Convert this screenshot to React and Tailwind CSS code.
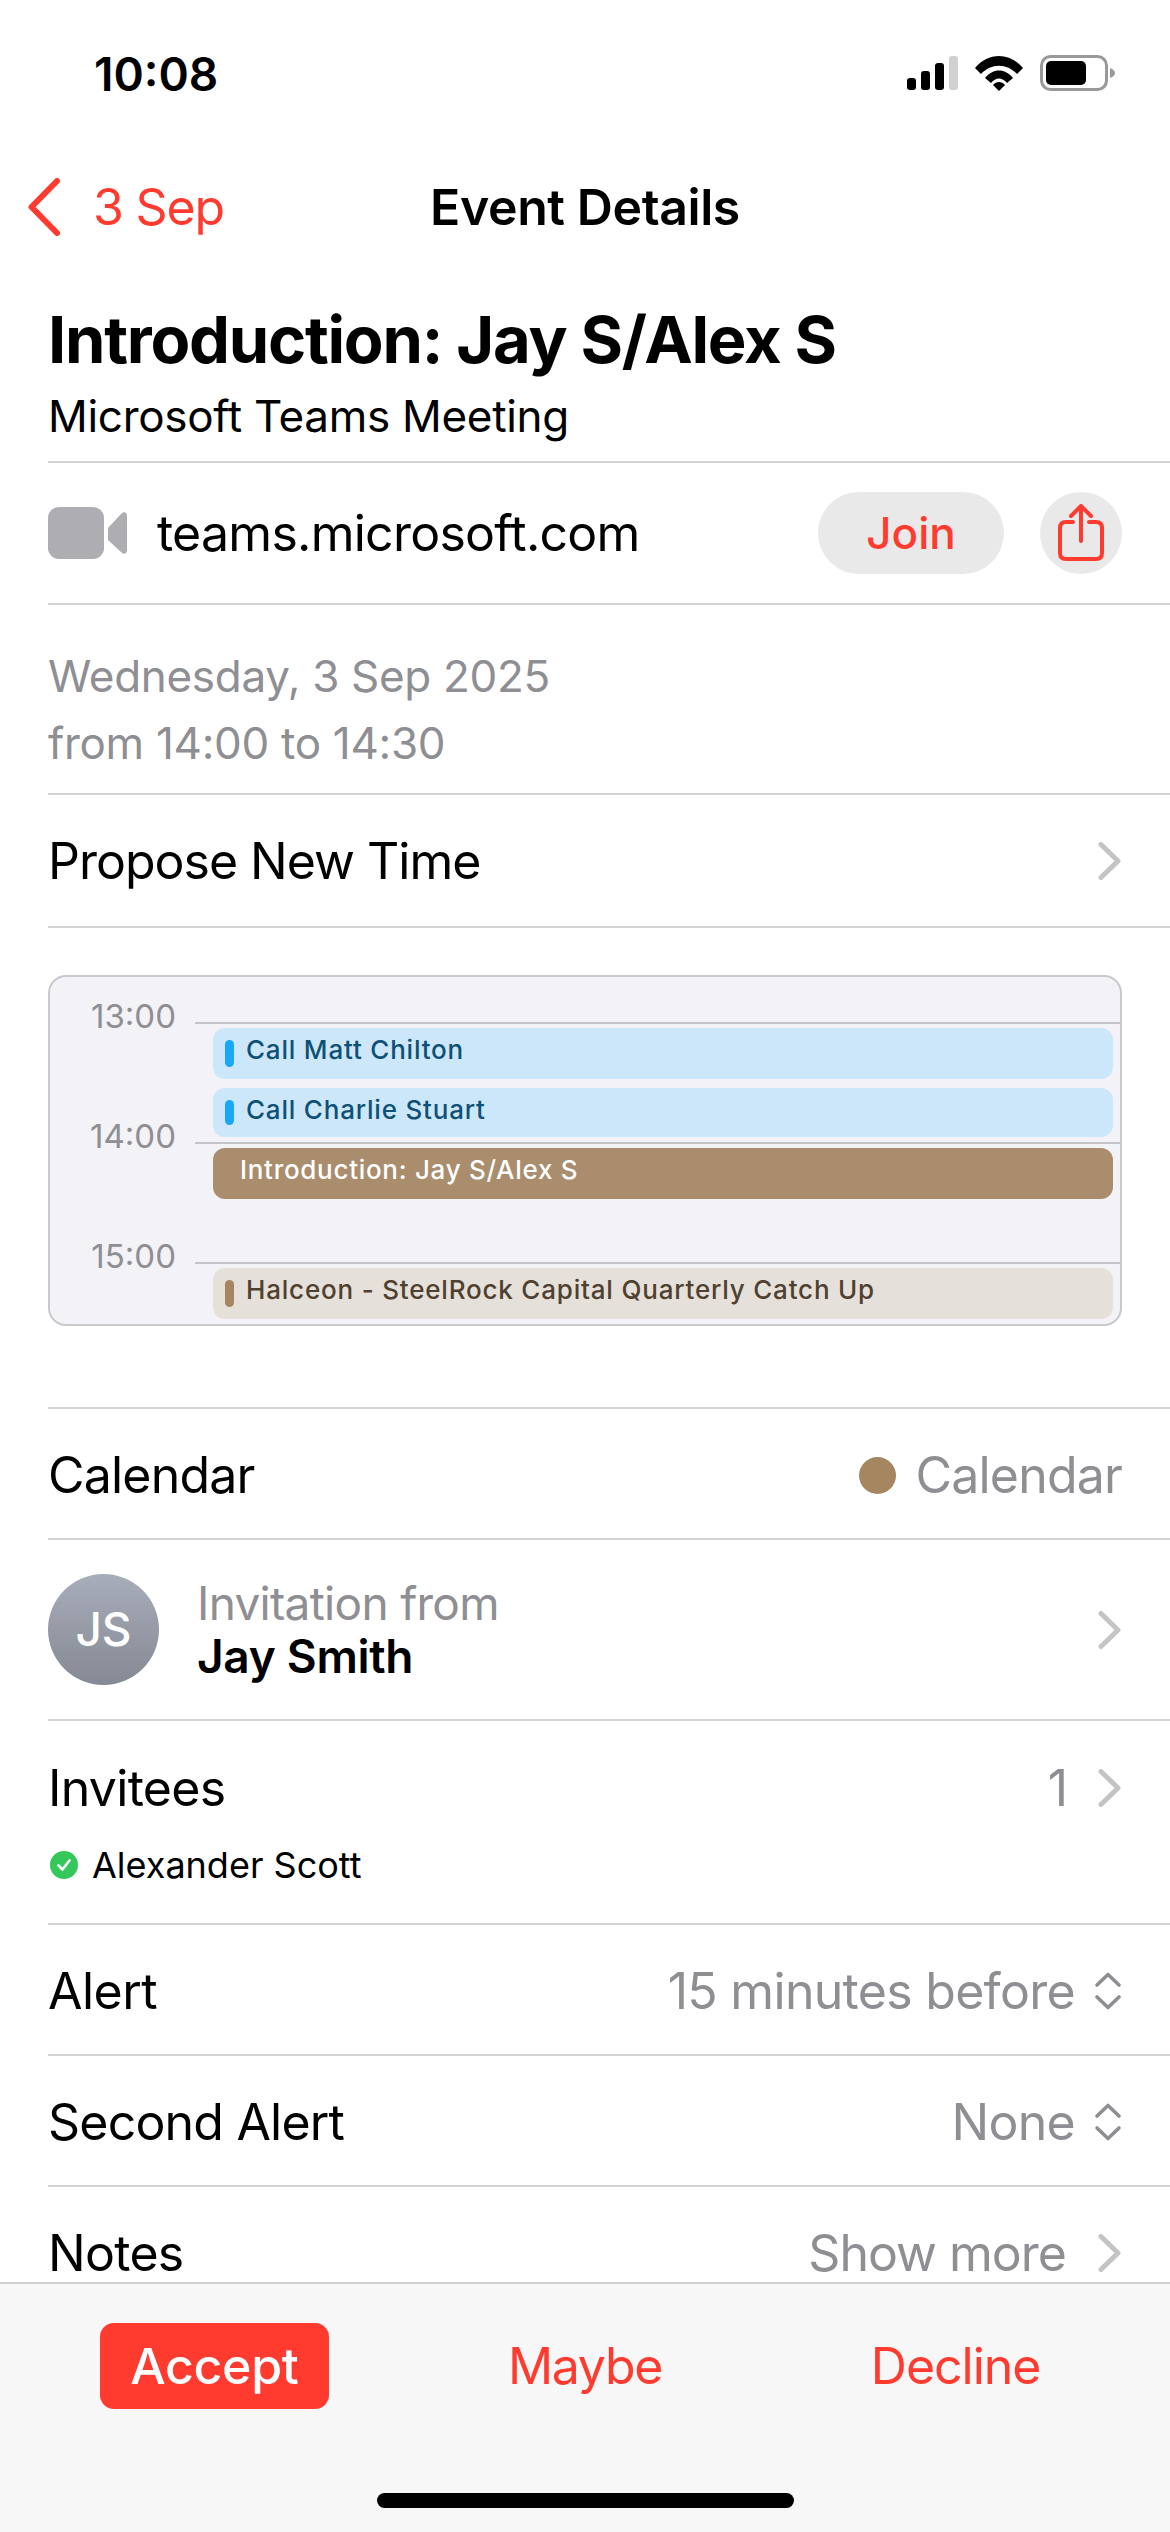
import React from 'react';

const hours = [
  { id: 'h0', rowClass: 'h-[47px]', label: '13:00' },
  { id: 'h1', rowClass: 'h-[120px]', label: '14:00' },
  { id: 'h2', rowClass: 'h-[120px]', label: '15:00' },
];

const events = [
  { id: 'e1', title: 'Call Matt Chilton', box: 'top-[51px] h-[51px] bg-[#cbe7f9] text-[#0f5076]', bar: 'bg-[#1aa7f5]', barPos: 'top-[12px] h-[27px]' },
  { id: 'e2', title: 'Call Charlie Stuart', box: 'top-[111px] h-[49px] bg-[#cbe7f9] text-[#0f5076]', bar: 'bg-[#1aa7f5]', barPos: 'top-[12px] h-[25px]' },
  { id: 'e4', title: 'Halceon - SteelRock Capital Quarterly Catch Up', box: 'top-[291px] h-[51px] bg-[#e5e0da] text-[#4f4030]', bar: 'bg-[#a58660]', barPos: 'top-[12px] h-[27px]' },
];

const Chevron = () => (
  <svg className="w-[24px] h-[38px]" viewBox="0 0 24 38" fill="none">
    <path d="M3 2.5 L20 19 L3 35.5" stroke="#c4c4c7" strokeWidth="5" strokeLinecap="round" strokeLinejoin="round" />
  </svg>
);

const UpDown = () => (
  <svg className="w-[28px] h-[38px]" viewBox="0 0 28 38" fill="none">
    <path d="M3 13 L14 2.5 L25 13 M3 25 L14 35.5 L25 25" stroke="#8e8e93" strokeWidth="3.6" strokeLinecap="round" strokeLinejoin="round" />
  </svg>
);

const Row = ({ className, children }) => (
  <div className={`ml-[48px] pr-[48px] flex items-center border-b-2 border-[#d4d4d6] ${className}`}>
    {children}
  </div>
);

const App = () => {
  return (
    <div className="w-[1170px] h-[2532px] flex flex-col overflow-hidden bg-white text-black font-[Inter,sans-serif]">
      {/* Status bar */}
      <div className="h-[150px] shrink-0 pl-[94px] pr-[55px] pt-[50px] flex items-start justify-between">
        <span className="text-[46px] leading-[48px] font-semibold">10:08</span>
        <div className="flex items-start gap-[17px] pt-[5px]">
          <svg className="w-[51px] h-[36px]" viewBox="0 0 51 36">
            <rect x="0" y="23" width="9" height="12" rx="3" fill="#000" />
            <rect x="14" y="16" width="9" height="19" rx="3" fill="#000" />
            <rect x="28" y="8" width="9" height="27" rx="3" fill="#000" />
            <rect x="42" y="1" width="9" height="34" rx="3" fill="#d0d0d0" />
          </svg>
          <svg className="w-[48px] h-[36px]" viewBox="0 0 48 36">
            <path d="M0 13 C13 -3 35 -3 48 13 L42 19 C32 8 16 8 6 19 Z" fill="#000" />
            <path d="M10 23 C18 13 30 13 38 23 L32 28 C27 22 21 22 16 28 Z" fill="#000" />
            <path d="M18 30 C21 26 27 26 30 30 L24 36 Z" fill="#000" />
          </svg>
          <svg className="w-[75px] h-[36px]" viewBox="0 0 75 36">
            <rect x="1.5" y="1.5" width="65" height="33" rx="9" fill="none" stroke="#999" strokeWidth="3" />
            <rect x="6" y="6" width="40" height="24" rx="5" fill="#000" />
            <path d="M70 13 C73 14 75 16 75 18 C75 20 73 22 70 23 Z" fill="#999" />
          </svg>
        </div>
      </div>

      {/* Nav bar */}
      <div className="h-[114px] shrink-0 relative flex items-center pl-[28px]">
        <svg className="w-[32px] h-[58px]" viewBox="0 0 32 58" fill="none">
          <path d="M29 3 L3.500 29 L29 55" stroke="#ff3b30" strokeWidth="6" strokeLinecap="round" strokeLinejoin="round" />
        </svg>
        <span className="ml-[33px] text-[50px] leading-[60px] tracking-[-1.2px] text-[#ff3b30]">3 Sep</span>
        <span className="absolute left-0 right-0 text-center text-[50px] leading-[60px] font-semibold tracking-[-0.4px]">Event Details</span>
      </div>

      <div className="flex-1 min-h-0 overflow-hidden">
        {/* Title */}
        <div className="ml-[48px] h-[199px] border-b-2 border-[#d4d4d6] pt-[36px]">
          <h1 className="text-[65px] leading-[80px] font-bold tracking-[-1.25px]">Introduction: Jay S/Alex S</h1>
          <p className="text-[44px] leading-[54px] tracking-[-0.3px] mt-[9px]">Microsoft Teams Meeting</p>
        </div>

        {/* Join row */}
        <Row className="h-[142px]">
          <svg className="w-[79px] h-[52px] shrink-0" viewBox="0 0 79 52">
            <rect x="0" y="0" width="56" height="52" rx="11" fill="#aeaeb2" />
            <path d="M60 21 L73 7 C76 4 79 5 79 9 L79 43 C79 47 76 48 73 45 L60 33 Z" fill="#aeaeb2" />
          </svg>
          <span className="ml-[30px] text-[50px] leading-[60px] tracking-[-0.75px]">teams.microsoft.com</span>
          <button className="ml-auto w-[186px] h-[82px] rounded-full bg-[#e9e9ea] text-[#ff3b30] text-[44px] font-medium">Join</button>
          <div className="ml-[36px] w-[82px] h-[82px] rounded-full bg-[#e9e9ea] flex items-center justify-center">
            <svg className="w-[46px] h-[58px]" viewBox="0 0 46 58" fill="none">
              <path d="M15 18 H8 C4 18 2 20 2 24 V49 C2 53 4 55 8 55 H38 C42 55 44 53 44 49 V24 C44 20 42 18 38 18 H31" stroke="#ff3b30" strokeWidth="4" strokeLinecap="round" />
              <path d="M23 37 V3 M13 12 L23 2 L33 12" stroke="#ff3b30" strokeWidth="4" strokeLinecap="round" strokeLinejoin="round" />
            </svg>
          </div>
        </Row>

        {/* Date */}
        <div className="ml-[48px] h-[190px] border-b-2 border-[#d4d4d6] pt-[38px] text-[44px] leading-[67px] tracking-[-0.3px] text-[#8e8e93]">
          <div>Wednesday, 3 Sep 2025</div>
          <div>from 14:00 to 14:30</div>
        </div>

        <Row className="h-[133px] justify-between">
          <span className="text-[50px] leading-[60px] tracking-[-1px]">Propose New Time</span>
          <Chevron />
        </Row>

        {/* Day preview */}
        <div className="ml-[48px] pr-[48px] h-[481px] pt-[47px] border-b-2 border-[#d4d4d6]">
          <div className="relative h-[351px] rounded-[18px] border-2 border-[#c9c9cd] bg-[#f2f2f7] overflow-hidden">
            {hours.map((h) => (
              <div key={h.id} className={`flex items-end ${h.rowClass}`}>
                <span className="w-[145px] pr-[19px] text-right text-[33px] leading-[14px] text-[#8e8e93] relative bottom-[1px]">{h.label}</span>
                <div className="flex-1 h-[2px] bg-[#c4c4c8]" />
              </div>
            ))}
            {events.map((e) => (
              <div key={e.id} className={`absolute left-[163px] right-[7px] rounded-[12px] pl-[33px] text-[26px] leading-[44px] font-medium tracking-[0.8px] ${e.box}`}>
                <div className={`absolute left-[12px] w-[9px] rounded-full ${e.bar} ${e.barPos}`} />
                {e.title}
              </div>
            ))}
            <div className="absolute left-[163px] right-[7px] top-[171px] h-[51px] rounded-[12px] bg-[#a98d6d] pl-[27px] text-[26px] leading-[44px] font-medium tracking-[0.7px] text-white">
              Introduction: Jay S/Alex S
            </div>
          </div>
        </div>

        <Row className="h-[131px] pt-[3px] justify-between">
          <span className="text-[50px] leading-[60px] tracking-[-0.8px]">Calendar</span>
          <div className="flex items-center gap-[19px]">
            <span className="w-[37px] h-[37px] rounded-full bg-[#a58660]" />
            <span className="text-[50px] leading-[60px] tracking-[-0.8px] text-[#8e8e93]">Calendar</span>
          </div>
        </Row>

        <Row className="h-[181px]">
          <div className="w-[111px] h-[111px] rounded-full bg-linear-to-b from-[#a8adba] to-[#858993] flex items-center justify-center text-white text-[46px] font-medium">JS</div>
          <div className="ml-[38px] flex flex-col">
            <span className="text-[46px] leading-[53px] tracking-[-0.7px] text-[#8e8e93]">Invitation from</span>
            <span className="text-[46px] leading-[53px] tracking-[-0.3px] font-semibold">Jay Smith</span>
          </div>
          <div className="ml-auto flex"><Chevron /></div>
        </Row>

        <div className="ml-[48px] pr-[48px] h-[204px] border-b-2 border-[#d4d4d6] pt-[37px]">
          <div className="flex items-center justify-between">
            <span className="text-[50px] leading-[60px] tracking-[-0.7px]">Invitees</span>
            <div className="flex items-center gap-[30px]">
              <span className="text-[50px] leading-[60px] text-[#8e8e93]">1</span>
              <Chevron />
            </div>
          </div>
          <div className="flex items-center gap-[14px] mt-[25px] pl-[2px]">
            <svg className="w-[28px] h-[28px]" viewBox="0 0 28 28">
              <circle cx="14" cy="14" r="14" fill="#34c759" />
              <path d="M8.500 14.500 L12.500 18.500 L19.500 9.500" fill="none" stroke="#fff" strokeWidth="2.600" strokeLinecap="round" strokeLinejoin="round" />
            </svg>
            <span className="text-[36px] leading-[44px]">Alexander Scott</span>
          </div>
        </div>

        <Row className="h-[131px] pt-[3px] justify-between">
          <span className="text-[50px] leading-[60px] tracking-[-0.5px]">Alert</span>
          <div className="flex items-center gap-[19px]">
            <span className="text-[50px] leading-[60px] tracking-[-0.7px] text-[#8e8e93]">15 minutes before</span>
            <UpDown />
          </div>
        </Row>

        <Row className="h-[131px] pt-[3px] justify-between">
          <span className="text-[50px] leading-[60px] tracking-[-0.8px]">Second Alert</span>
          <div className="flex items-center gap-[19px]">
            <span className="text-[50px] leading-[60px] tracking-[-0.7px] text-[#8e8e93]">None</span>
            <UpDown />
          </div>
        </Row>

        <div className="ml-[48px] pr-[48px] h-[131px] flex items-center justify-between">
          <span className="text-[50px] leading-[60px] tracking-[-0.7px]">Notes</span>
          <div className="flex items-center gap-[32px]">
            <span className="text-[50px] leading-[60px] tracking-[-1px] text-[#8e8e93]">Show more</span>
            <Chevron />
          </div>
        </div>
      </div>

      {/* Response bar */}
      <div className="h-[250px] shrink-0 bg-[#f7f7f7] border-t-2 border-[#d0d0d2] pt-[39px] flex flex-col items-center">
        <div className="w-full px-[29px] grid grid-cols-3 justify-items-center items-center text-[50px] leading-[60px] text-[#ff3b30]">
          <button className="w-[229px] h-[86px] rounded-[14px] bg-[#ff3b30] text-white font-medium tracking-[-0.3px]">Accept</button>
          <button className="tracking-[-1.3px]">Maybe</button>
          <button className="tracking-[-1px]">Decline</button>
        </div>
        <div className="mt-[84px] w-[417px] h-[15px] rounded-full bg-black" />
      </div>
    </div>
  );
};

export default App;
